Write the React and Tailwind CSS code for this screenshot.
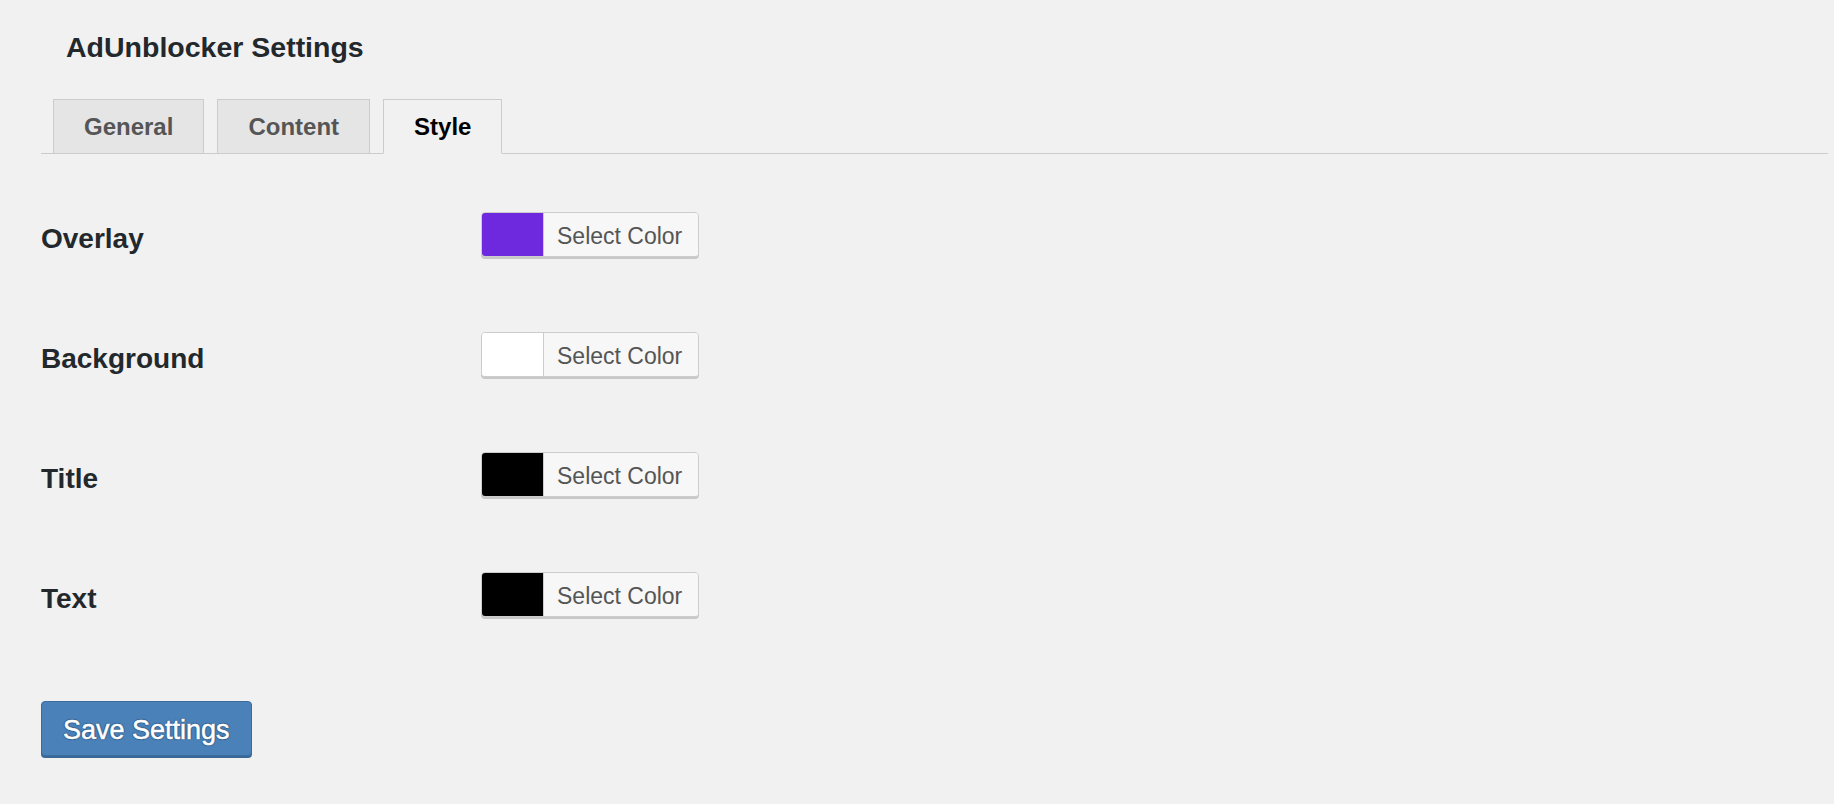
import React from "react";

const rows = [
  { label: "Overlay", color: "bg-[#6e29de]" },
  { label: "Background", color: "bg-white" },
  { label: "Title", color: "bg-black" },
  { label: "Text", color: "bg-black" },
];

function ColorPicker({ color }) {
  return (
    <button
      type="button"
      className="flex h-[45px] items-stretch overflow-hidden rounded-[4px] border border-[#cccccc] bg-[#f7f7f7] p-0 shadow-[0_2px_0_#c8c8c8]"
    >
      <span className={`block w-[61px] ${color}`} />
      <span className="flex items-center border-l border-[#cccccc] bg-[#f7f7f7] pl-[13px] pr-[16px] pt-[2px] text-[23px] leading-[26px] text-[#555555]">
        Select Color
      </span>
    </button>
  );
}

export default function App() {
  const tabs = ["General", "Content", "Style"];
  return (
    <div
      className="min-h-screen bg-[#f1f1f1] pl-[41px] pr-[6px] text-[#23282d]"
      style={{ fontFamily: '"Liberation Sans", Arial, sans-serif' }}
    >
      <h1 className="pl-[25px] pt-[31px] text-[28.5px] font-bold leading-[32px]">
        AdUnblocker Settings
      </h1>

      <nav className="mt-[36px] flex gap-[13px] border-b border-[#cccccc] pl-[12px]">
        {tabs.map((t) => {
          const active = t === "Style";
          return (
            <a
              key={t}
              className={
                active
                  ? "-mb-px flex h-[55px] items-center border border-[#cccccc] border-b-[#f1f1f1] bg-[#f1f1f1] px-[30px] text-[24px] font-bold text-black"
                  : "-mb-px flex h-[55px] items-center border border-[#cccccc] bg-[#e5e5e5] px-[30px] text-[24px] font-bold text-[#555555]"
              }
            >
              {t}
            </a>
          );
        })}
      </nav>

      <div className="mt-[58px] flex flex-col">
        {rows.map((r) => (
          <div key={r.label} className="flex h-[120px] items-start">
            <div className="w-[440px] pt-[11px] text-[28px] font-bold leading-[32px]">
              {r.label}
            </div>
            <ColorPicker color={r.color} />
          </div>
        ))}
      </div>

      <button
        type="button"
        className="mt-[9px] flex h-[55px] items-center rounded-[4px] border border-[#3b6c9d] bg-[#4a81b8] px-[21px] pt-[2px] text-[27px] leading-[30px] text-white shadow-[0_2px_0_#3a6896] [-webkit-text-stroke:0.5px_white] [text-shadow:0_-1px_1px_#2f5b87,1px_0_1px_#2f5b87,0_1px_1px_#2f5b87,-1px_0_1px_#2f5b87]"
      >
        Save Settings
      </button>
    </div>
  );
}
